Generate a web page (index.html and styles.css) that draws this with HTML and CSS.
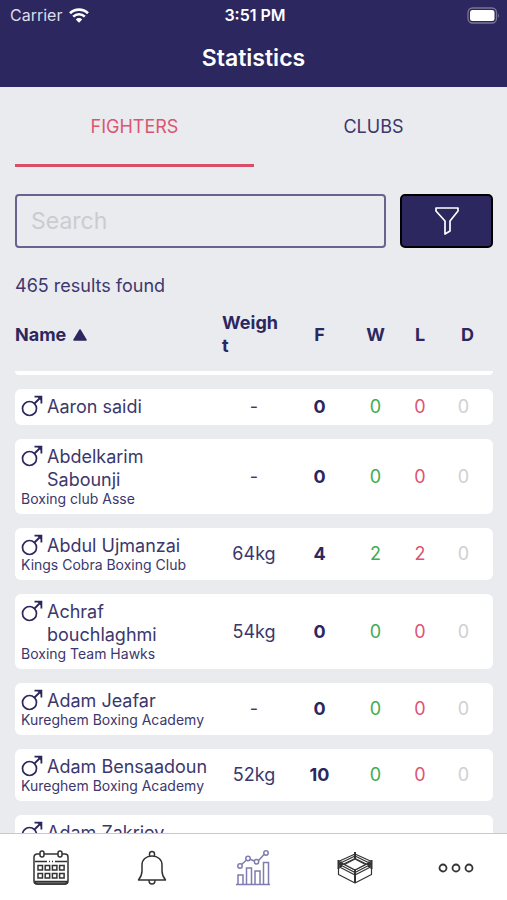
FILE: index.html
```html
<!DOCTYPE html>
<html lang="en">
<head>
<meta charset="utf-8">
<meta name="viewport" content="width=device-width, initial-scale=1">
<title>Statistics</title>
<link rel="stylesheet" href="styles.css">
</head>
<body>
<svg class="defs" aria-hidden="true">
  <symbol id="male" viewBox="0 0 22 22">
    <circle cx="8.5" cy="13.5" r="7" fill="none" stroke="currentColor" stroke-width="1.7"/>
    <path d="M13.5 8.5 20 2M13.5 1.6h6.9v6.9" fill="none" stroke="currentColor" stroke-width="1.8"/>
    <path d="M16 1.6h4.4V6z" fill="currentColor"/>
  </symbol>
</svg>
<div class="app">
  <header class="header">
    <div class="status">
      <span class="carrier">Carrier
        <svg width="20" height="15" viewBox="0 0 20 15" aria-hidden="true"><g fill="none" stroke="#fff" stroke-width="2.6"><path d="M1 5.2a13 13 0 0 1 18 0"/><path d="M4.2 8.6a8.4 8.4 0 0 1 11.6 0"/></g><path d="M6.8 11.4a4.6 4.6 0 0 1 6.4 0L10 14.7z" fill="#fff"/></svg>
      </span>
      <span class="clock">3:51 PM</span>
      <svg class="battery" width="33" height="17" viewBox="0 0 33 17" aria-hidden="true"><rect x="1" y="1" width="28.500" height="15" rx="4.500" fill="none" stroke="#79759b" stroke-width="1.300"/><rect x="3" y="3" width="24.500" height="11" rx="2.500" fill="#fff"/><path d="M31 6.200q1.800 2.300 0 4.600z" fill="#79759b"/></svg>
    </div>
    <h1 class="title">Statistics</h1>
  </header>

  <main class="main">
    <nav class="tabs">
      <a class="tab active" href="#fighters">FIGHTERS</a>
      <a class="tab" href="#clubs">CLUBS</a>
    </nav>

    <form class="search">
      <input class="search-input" type="text" placeholder="Search" aria-label="Search">
      <button class="filter" type="button" aria-label="Filter">
        <svg width="26" height="30" viewBox="0 0 26 30" fill="none" stroke="#fff" stroke-width="1.700" stroke-linejoin="round"><path d="M2 2h22v3L16 15v10l-5 3V15L2 5z"/></svg>
      </button>
    </form>

    <p class="count">465 results found</p>

    <div class="results">
      <table class="table">
        <colgroup><col><col class="c-weight"><col class="c-f"><col class="c-w"><col class="c-l"><col class="c-d"></colgroup>
        <thead>
          <tr>
            <th class="h-name" scope="col">Name <svg width="14" height="12" viewBox="0 0 14 12" aria-hidden="true"><path d="M7 1 13 11H1z" fill="currentColor" stroke="currentColor" stroke-width="1.500" stroke-linejoin="round"/></svg></th>
            <th class="h-weight" scope="col">Weight</th>
            <th scope="col">F</th><th scope="col">W</th><th scope="col">L</th><th scope="col">D</th>
          </tr>
        </thead>
        <tbody>
          <tr class="edge"><td colspan="6"></td></tr>
          <tr><td><div class="name"><svg class="male"><use href="#male"/></svg><span>Aaron saidi</span></div></td><td>-</td><td class="f">0</td><td class="w">0</td><td class="l">0</td><td class="d">0</td></tr>
          <tr><td><div class="name"><svg class="male"><use href="#male"/></svg><span>Abdelkarim Sabounji</span></div><div class="club">Boxing club Asse</div></td><td>-</td><td class="f">0</td><td class="w">0</td><td class="l">0</td><td class="d">0</td></tr>
          <tr><td><div class="name"><svg class="male"><use href="#male"/></svg><span>Abdul Ujmanzai</span></div><div class="club">Kings Cobra Boxing Club</div></td><td>64kg</td><td class="f">4</td><td class="w">2</td><td class="l">2</td><td class="d">0</td></tr>
          <tr><td><div class="name"><svg class="male"><use href="#male"/></svg><span>Achraf bouchlaghmi</span></div><div class="club">Boxing Team Hawks</div></td><td>54kg</td><td class="f">0</td><td class="w">0</td><td class="l">0</td><td class="d">0</td></tr>
          <tr><td><div class="name"><svg class="male"><use href="#male"/></svg><span>Adam Jeafar</span></div><div class="club">Kureghem Boxing Academy</div></td><td>-</td><td class="f">0</td><td class="w">0</td><td class="l">0</td><td class="d">0</td></tr>
          <tr><td><div class="name"><svg class="male"><use href="#male"/></svg><span>Adam Bensaadoun</span></div><div class="club">Kureghem Boxing Academy</div></td><td>52kg</td><td class="f">10</td><td class="w">0</td><td class="l">0</td><td class="d">0</td></tr>
          <tr><td><div class="name"><svg class="male"><use href="#male"/></svg><span>Adam Zakriev</span></div><div class="club"></div></td><td></td><td class="f">0</td><td class="w">0</td><td class="l">0</td><td class="d">0</td></tr>
        </tbody>
      </table>
    </div>
  </main>

  <nav class="bottom">
    <a href="#calendar" aria-label="Calendar">
      <svg width="36" height="36" viewBox="0 0 36 36" fill="none" stroke="#333" stroke-width="1.500"><path d="M7 4H4a3 3 0 0 0-3 3v24a3 3 0 0 0 3 3h28a3 3 0 0 0 3-3V7a3 3 0 0 0-3-3h-3M11 4h14M2 11.500h12M22 11.500h12M16 11.500h1M19 11.500h1"/><path d="M2 31.500h32v1q-1 1.500-3 1.500H5q-2 0-3-1.500z" fill="#777"/><rect x="7" y="1" width="4" height="6" rx="2"/><rect x="25" y="1" width="4" height="6" rx="2"/><path d="M5 15.500h4.500v4.500H5zM12.200 15.500h4.500v4.500h-4.500zM19.400 15.500h4.500v4.500h-4.500zM26.600 15.500h4.500v4.500h-4.500zM5 23.500h4.500v4.500H5zM12.200 23.500h4.500v4.500h-4.500zM19.400 23.500h4.500v4.500h-4.500zM26.600 23.500h4.500v4.500h-4.500z"/></svg>
    </a>
    <a href="#notifications" aria-label="Notifications">
      <svg width="36" height="36" viewBox="0 0 36 36" fill="none" stroke="#333" stroke-width="1.500" stroke-linejoin="round"><path d="M15.500 6.500V4a2.500 2.500 0 0 1 5 0v2.500M8 21v-6C8 9.500 12 6 18 6s10 3.500 10 9v6c0 4 1.500 6.500 3.500 9h-27C6.500 27.500 8 25 8 21zM15 30.500a3 3.500 0 0 0 6 0"/></svg>
    </a>
    <a href="#statistics" aria-label="Statistics">
      <svg width="36" height="36" viewBox="0 0 36 36" fill="none" stroke="#7f7cb0" stroke-width="1.500"><path d="M1 34.500h34M3 34V25h5v9M11.500 34V18h5v16M20 34V21h5v13M28.500 34V12.500h5V34M6.500 14.500l5-4.500M15 9.300l4.500 1.700M23.500 10.500l6-6.500"/><circle cx="5" cy="16" r="2.200"/><circle cx="13" cy="8.500" r="2.200"/><circle cx="21.500" cy="11.800" r="2.200"/><circle cx="31" cy="3" r="2.200"/></svg>
    </a>
    <a href="#ring" aria-label="Boxing ring">
      <svg width="36" height="36" viewBox="0 0 36 36" fill="none" stroke="#333" stroke-width="1.200" stroke-linejoin="round"><path d="M1.500 11.500 18 4l16.500 7.500M1.500 14 18 6l16.500 8M1.500 16.500 18 8.500l16.500 8"/><path d="M1.500 11.500 18 20l16.500-8.500M1.500 14 18 22.500 34.500 14M1.500 16.500 18 25l16.500-8.500"/><path d="m18 9 10.500 5.500L18 20 7.500 14.500z" fill="#fff"/><path d="M1.500 18v6.500L18 33l16.500-8.500V18"/><path d="M1.500 10v9M34.500 10v9M18 2v7M18 19.500V33" stroke-width="2"/><path d="M4 11.500v5.500M32 11.500v5.500" stroke-width="2"/></svg>
    </a>
    <a href="#more" aria-label="More">
      <svg width="36" height="36" viewBox="0 0 36 36" fill="none" stroke="#333" stroke-width="1.800"><circle cx="5" cy="18" r="3.500"/><circle cx="18" cy="18" r="3.500"/><circle cx="31" cy="18" r="3.500"/></svg>
    </a>
  </nav>
</div>
</body>
</html>
```
FILE: styles.css
```css
* { box-sizing: border-box; }

body {
  margin: 0;
  font-family: Inter, "Liberation Sans", sans-serif;
  font-size: 18px;
  line-height: 23px;
  color: #3c376c;
  background: #eaebef;
}

.defs { position: absolute; width: 0; height: 0; }

a { color: inherit; text-decoration: none; }

.app {
  display: flex;
  flex-direction: column;
  height: 100vh;
  overflow: hidden;
}

.header {
  flex: none;
  height: 87px;
  color: #fff;
  background: #2c275e;
}

.status {
  display: grid;
  grid-template-columns: 1fr auto 1fr;
  align-items: center;
  height: 30px;
  padding: 0 7px 0 10px;
  font-size: 16px;
}

.carrier { display: flex; align-items: center; gap: 7px; color: #dddce8; }
.clock { font-weight: 600; }
.battery { justify-self: end; }

.title {
  margin: 0;
  padding-top: 16px;
  font-size: 23px;
  line-height: 24px;
  font-weight: 600;
  text-align: center;
}

.main {
  display: flex;
  flex: 1;
  flex-direction: column;
  min-height: 0;
  padding: 0 14px 0 15px;
}

.tabs { display: flex; flex: none; }

.tab {
  flex: 1;
  height: 80px;
  padding-top: 28px;
  border-bottom: 3px solid transparent;
  text-align: center;
}

.tab.active { color: #db5571; border-color: #d84e68; }

.search {
  display: grid;
  flex: none;
  grid-template-columns: 4fr 1fr;
  gap: 14px;
  height: 54px;
  margin: 27px 0 0;
}

.search-input {
  min-width: 0;
  padding: 0 14px;
  border: 2px solid #67638f;
  border-radius: 4px;
  background: transparent;
  color: inherit;
  font: inherit;
  font-size: 23px;
}

.search-input::placeholder { color: #cbccd0; opacity: 1; }

.filter {
  display: flex;
  align-items: center;
  justify-content: center;
  padding: 0;
  border: 2px solid #000;
  border-radius: 5px;
  background: #2c275e;
}

.count { flex: none; margin: 27px 0 0; line-height: 22px; }

.results { flex: 1; min-height: 0; overflow: hidden; }

.table {
  width: 100%;
  table-layout: fixed;
  border-spacing: 0 14px;
}

.c-weight { width: 64px; }
.c-f { width: 67px; }
.c-w { width: 45px; }
.c-l { width: 44px; }
.c-d { width: 51px; }

th {
  padding: 0;
  color: #2c275e;
  font-weight: 700;
}

.h-name { text-align: left; }
.h-name svg { margin-left: 2px; }
.h-weight { padding-right: 3px; text-align: left; word-break: break-all; }

td {
  height: 36px;
  padding: 6px 0 7px;
  background: #fff;
  text-align: center;
}

td:first-child { padding-left: 6px; border-radius: 6px 0 0 6px; text-align: left; }
td:last-child { padding-right: 8px; border-radius: 0 6px 6px 0; }

.edge td:first-child { height: 4px; padding: 0; border-radius: 0 0 6px 6px; }

.name { display: flex; gap: 4px; padding-right: 8px; }
.male { flex: none; width: 22px; height: 22px; color: #2c275e; }
.club { height: 16px; font-size: 14px; line-height: 16px; }

.f { color: #2c275e; font-weight: 700; }
.w { color: #41ab51; }
.l { color: #db5571; }
.d { color: #cfcfd1; }

.bottom {
  display: grid;
  flex: none;
  grid-template-columns: repeat(5, 1fr);
  height: 67px;
  padding-top: 16px;
  border-top: 1px solid #c9c9cc;
  background: #fff;
}

.bottom a { display: flex; justify-content: center; }
```
